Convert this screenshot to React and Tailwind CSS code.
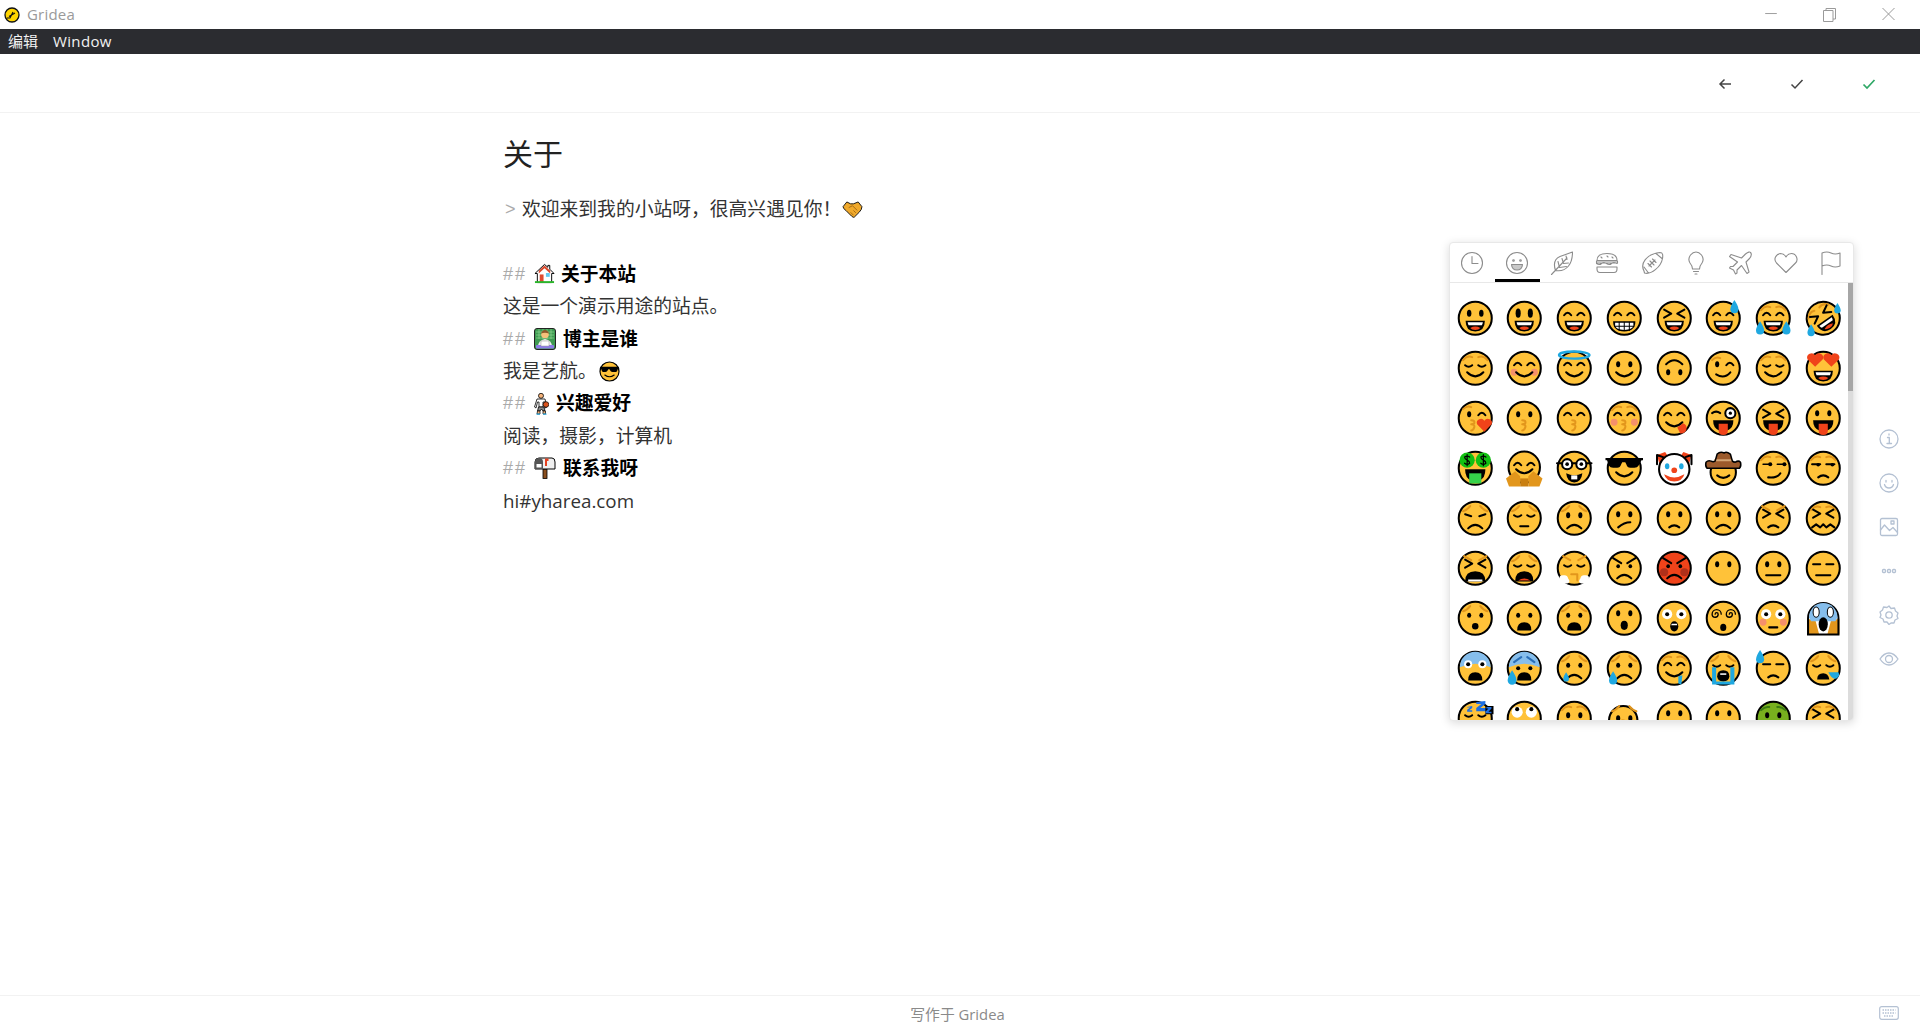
import React, { Fragment, createElement } from "react";

const Y = "#FFC239";
const K = "#000";
const O = "#E2961C";
const R = "#F0431A";
const B = "#1FA8E0";

// emoji parts, all in a 36x36 box
const S = (d, c = K, w = 2) => (
  <path d={d} fill="none" stroke={c} strokeWidth={w} strokeLinecap="round" strokeLinejoin="round" />
);
const F = (d, c = K) => <path d={d} fill={c} />;
const face = (fill = Y) => <circle cx="18" cy="18" r="16.3" fill={fill} stroke={K} strokeWidth="2" />;
const dots = (y = 14, r = 2, h = 3) => (
  <>
    <ellipse cx="12" cy={y} rx={r} ry={h} />
    <ellipse cx="24" cy={y} rx={r} ry={h} />
  </>
);
const tall = () => dots(13, 2.5, 4.5);
const arch = () => S("M8 15q3.5-5 7 0M21 15q3.5-5 7 0");
const shut = () => S("M8 15q3.5 3 7 0M21 15q3.5 3 7 0");
const xeyes = () => S("M8 9.5l7 4l-7 4M28 9.5l-7 4l7 4");
const flatEyes = () => S("M8 14h7M21 14h7");
const sad = () => S("M6 11q4-1 7-5M30 11q-4-1-7-5", O);
const up = () => S("M6 10q4-5 9-3M30 10q-4-5-9-3", O);
const angry = () => S("M7 6l7 4M29 6l-7 4", O);
const open = () => (
  <>
    {F("M8.5 20.5h19q0 10.500-9.500 10.500T8.500 20.500z")}
    {F("M10.500 22h15q-.3 2-1 3h-13q-.7-1-1-3z", "#fff")}
    {F("M13 27.500q5-2.500 10 0q-1.500 2-5 2t-5-2z", R)}
  </>
);
const tongue = () => (
  <>
    {F("M8 20h20q0 8-6 10H14Q8 28 8 20z")}
    {F("M13.500 23.500h9v7q0 4-4.500 4t-4.500-4z", R)}
  </>
);
const smile = () => S("M10 22q8 8 16 0");
const frown = () => S("M11 28q7-7 14 0");
const small = () => S("M13 27q5-4 10 0");
const flat = () => S("M11 25h14");
const kiss = (x = 0) => S(`M${16 + x} 20q4 0 3 3q-1 1-3 1q4 0 3 3t-3 3`, O);
const cheeks = () => (
  <>
    <circle cx="8" cy="22" r="3.4" fill="#F5906A" />
    <circle cx="28" cy="22" r="3.4" fill="#F5906A" />
  </>
);
const drop = (x, y, s = 1) => F(`M${x} ${y}q${-4 * s} ${6 * s} ${-4 * s} ${9 * s}a${4 * s} ${4 * s} 0 0 0 ${8 * s} 0q0 ${-3 * s} ${-4 * s} ${-9 * s}z`, B);
const heart = (x, y, s = 1, c = R) => F(`M${x} ${y + 8 * s}l${-8 * s} ${-8 * s}a${4.5 * s} ${4.5 * s} 0 0 1 ${8 * s} ${-4 * s}a${4.5 * s} ${4.5 * s} 0 0 1 ${8 * s} ${4 * s}z`, c);
const blueTop = () => F("M2.8 17a15.2 15.2 0 0 1 30.4 0q-15-7-30.4 0z", "#86BEEC");
const bigEyes = (w = 5) => (
  <>
    <circle cx="11" cy="14" r={w} fill="#fff" />
    <circle cx="25" cy="14" r={w} fill="#fff" />
    <circle cx="11" cy="14" r="2" />
    <circle cx="25" cy="14" r="2" />
  </>
);
const bMouth = () => F("M11 30q0-8 7-8t7 8z");
const oMouth = (y = 26, rx = 3, ry = 3.5) => <ellipse cx="18" cy={y} rx={rx} ry={ry} />;
const spiral = (x) => S(`M${x} 14a1.5 1.5 0 0 1 3 0a3 3 0 0 1-6 0a4.5 4.5 0 0 1 9 0`, K, 1.3);
const winkEye = () => <ellipse cx="12" cy="14" rx="2" ry="3" />;
const E = (...parts) => createElement(Fragment, null, ...parts);

// rows read off the picker, left to right
const emojis = [
  E(face(), dots(13, 2.2, 3.5), open()),
  E(face(), tall(), open()),
  E(face(), arch(), open()),
  E(face(), arch(), F("M7 21h22q0 10-11 10T7 21z"), F("M9 22.5h18v3q-1 4-9 4t-9-4z", "#fff"), S("M13 22v8M18 22v8M23 22v8M8.5 26h19", K, 1)),
  E(face(), xeyes(), open()),
  E(face(), arch(), open(), drop(29, 0, 1)),
  E(face(), up(), arch(), open(), drop(5, 21, 1), drop(31, 21, 1)),
  E(<g transform="rotate(-35 18 18)">{face()}{up()}{xeyes()}{open()}</g>, drop(32, 3, .8), drop(6, 24, .9)),

  E(face(), up(), shut(), smile()),
  E(face(), arch(), cheeks(), smile()),
  E(face(), arch(), smile(), <ellipse cx="18" cy="5" rx="15" ry="3.5" fill="none" stroke={B} strokeWidth="2.4" />),
  E(face(), dots(), smile()),
  E(face(), dots(22), S("M10 14q8-8 16 0")),
  E(face(), S("M7 10q4-4 8-2", O), winkEye(), S("M21 15q3.5-5 7 0"), S("M11 24q8 5 14-2")),
  E(face(), up(), shut(), smile()),
  E(face(), heart(10, 9, .95), heart(26, 9, .95), open()),

  E(face(), S("M6 9q4-4 8-2", O), winkEye(), S("M21 15q3.5-5 7 0"), kiss(-2), heart(27, 24, .9)),
  E(face(), dots(), kiss()),
  E(face(), arch(), kiss()),
  E(face(), up(), arch(), cheeks(), kiss()),
  E(face(), arch(), smile(), F("M21 27l6-4q4 2 3 6t-6 4z", R)),
  E(face(), S("M7 13q4-3 8 0"), <circle cx="25" cy="13" r="5" fill="#fff" stroke={K} strokeWidth="2" />, <circle cx="25" cy="13" r="1.6" />, tongue()),
  E(face(), xeyes(), tongue()),
  E(face(), dots(13), tongue()),

  E(face(), <circle cx="10" cy="10" r="7.5" fill="#12C012" />, <circle cx="26" cy="10" r="7.5" fill="#12C012" />, S("M12.5 7q-2.500-2-5 0q0 2 2.500 3t2.500 3q-2.500 2-5 0M10 4.500v11M28.500 7q-2.500-2-5 0q0 2 2.500 3t2.500 3q-2.500 2-5 0M26 4.500v11", K, 1.2), F("M8 19h20q0 9-6 11H14Q8 28 8 19z"), F("M12 23h12v10H12z", "#35D24A")),
  E(<circle cx="18" cy="17" r="15.500" fill={Y} stroke={K} strokeWidth="2" />, arch(), S("M10 19q8 8 16 0"), F("M0 28l9-7l5 5v10H3z", O), F("M36 28l-9-7l-5 5v10h11z", O), F("M14 28h8v8h-8z", "#C97F10")),
  E(face(), <circle cx="11" cy="14" r="5" fill="#fff" stroke={K} strokeWidth="2" />, <circle cx="25" cy="14" r="5" fill="#fff" stroke={K} strokeWidth="2" />, <circle cx="11" cy="14" r="1.800" />, <circle cx="25" cy="14" r="1.800" />, S("M1 13h5M30 13h5M16 13h4"), F("M10 23q8 4 16 0q-1 9-8 9t-8-9z"), F("M15 25h6v4h-6z", "#fff")),
  E(face(), F("M-.5 8h37v2h-1.500l-3 5.500q-1 2-4 2h-4q-3 0-4-3.500l-1-2h-3l-1 2q-1 3.500-4 3.500H7q-3 0-4-2l-2-5.500H-.5z"), smile()),
  E(F("M1 5l8-3l4 6l-9 8zM35 5l-8-3l-4 6l9 8z", R), <circle cx="18" cy="19" r="15" fill="#fff" stroke={K} strokeWidth="2" />, S("M7 7L1 5v9M29 7l6-2v9"), <ellipse cx="11" cy="16" rx="2.200" ry="3" fill={B} />, <ellipse cx="25" cy="16" rx="2.200" ry="3" fill={B} />, <circle cx="18" cy="20" r="2.800" fill={R} />, F("M8 24q10 6 20 0q-2 7-10 7t-10-7z", R)),
  E(<circle cx="18" cy="22" r="12.500" fill={Y} stroke={K} strokeWidth="2" />, F("M1 12q-1 4 1 6h32q2-2 1-6q-2-2-5 0q-2 0-3-1l-2-7q-4-3-6-1q-4-2-7 1l-2 7q-2 1-4 0q-3-1-5 1z", "#9C5A2B"), F("M9 9h18l.5 2H8.500z", "#D4A574"), S("M1 12q-1 4 1 6h32q2-2 1-6q-2-2-5 0q-2 0-3-1l-2-7q-4-3-6-1q-4-2-7 1l-2 7q-2 1-4 0q-3-1-5 1z", K, 1.500), S("M12 25q6 5 12 0")),
  E(face(), up(), <circle cx="15" cy="14" r="2" />, <circle cx="29" cy="14" r="2" />, S("M8 14h8M22 14h8", K, 1.600), S("M13 27q9 1 12-4")),
  E(face(), up(), S("M7 14h8M21 14h8"), <circle cx="13" cy="14.500" r="1.800" />, <circle cx="27" cy="14.500" r="1.800" />, small()),

  E(face(), sad(), S("M8 14l6 2M28 14l-6 2"), frown()),
  E(face(), sad(), shut(), S("M14 26h8")),
  E(face(), sad(), dots(15), frown()),
  E(face(), dots(), S("M12 27q6-5 12-5")),
  E(face(), dots(), small()),
  E(face(), dots(), frown()),
  E(face(), angry(), xeyes(), small()),
  E(face(), up(), xeyes(), S("M7 27l4-3l4 3l3-3l3 3l4-3l4 3")),

  E(face(), angry(), xeyes(), F("M8 31q0-10 10-10t10 10z"), F("M11 29h14v2H11z", "#fff")),
  E(face(), sad(), shut(), F("M9 31q0-10 9-10t9 10z"), F("M12 30q6-4 12 0z", R)),
  E(face(), angry(), shut(), S("M15 24h6v6", O), F("M4 30q-2-5 3-5q4-1 5 3q3 4-1 5H7q-3 0-3-3z", "#fff"), F("M32 30q2-5-3-5q-4-1-5 3q-3 4 1 5h4q3 0 3-3z", "#fff")),
  E(face(), S("M7 8l8 5M29 8l-8 5"), dots(16, 1.800, 2), frown()),
  E(face(R), <circle cx="8" cy="22" r="4" fill="#B0301A" />, <circle cx="28" cy="22" r="4" fill="#B0301A" />, S("M7 8l8 5M29 8l-8 5"), dots(16, 1.800, 2), frown()),
  E(face(), dots()),
  E(face(), dots(), flat()),
  E(face(), flatEyes(), flat()),

  E(face(), sad(), dots(15, 2, 2.500), oMouth(26, 3.200, 3.200)),
  E(face(), dots(15, 2, 2.500), bMouth()),
  E(face(), sad(), dots(15, 2, 2.500), bMouth()),
  E(face(), dots(13), oMouth(25, 3.500, 4.500)),
  E(face(), bigEyes(5), oMouth(26, 4, 5), F("M15.500 23.500h5l.5 1.500h-6z", "#fff")),
  E(face(), spiral(10), spiral(24), oMouth(27, 3, 3.500)),
  E(face(), bigEyes(5), cheeks(), S("M14 27h8")),
  E(F("M2 19h8l4 15H2zM34 19h-8l-4 15h12z", O), <path d="M3 18a15 15 0 0 1 30 0v16H3z" fill="none" stroke={K} strokeWidth="2" />, F("M4 17a14 14 0 0 1 28 0l-2 4H6z", "#86BEEC"), <ellipse cx="11" cy="12" rx="3" ry="5" fill="#fff" stroke={K} strokeWidth="1" />, <ellipse cx="25" cy="12" rx="3" ry="5" fill="#fff" stroke={K} strokeWidth="1" />, <ellipse cx="18" cy="24" rx="4.500" ry="7" />),

  E(face(), blueTop(), bigEyes(4), bMouth()),
  E(face(), blueTop(), S("M8 12q4-3 7-5M28 12q-4-3-7-5", "#2A6FB8"), dots(18, 2, 2), bMouth(), drop(6, 20, 1.100)),
  E(face(), sad(), dots(15, 2, 2.500), frown(), drop(10, 22, .7)),
  E(face(), sad(), dots(15, 2, 2.500), frown(), drop(7, 21, 1)),
  E(face(), up(), arch(), smile(), F("M22 26l4-1l-1 9l-3-1z", B)),
  E(face(), sad(), shut(), F("M12 26q0-6 6-6t6 6q0 5-6 5t-6-5z"), F("M15 23h6v1.500h-6z", "#fff"), F("M7 17h4v14h14V17h4v17H7z", B)),
  E(face(), flatEyes(), small(), drop(5, 0, 1)),
  E(face(), sad(), shut(), F("M12 29q0-6 6-6q5 0 6 6z"), F("M23 22h10q2 4-2 6t-8-6z", B)),

  E(face(), shut(), F("M10 7l5-1v2l-3 2h3v1.500h-5v-2l3-2h-3zM19 2l9-1v3l-5 4h6v3h-10V8l5-4h-5z", "#1F6FE0"), F("M28 6h8v8h-8z", "#000"), F("M29 7h5v1.500l-3 3h3v1.500h-6v-1.500l3-3h-2z", "#1F6FE0")),
  E(face(), <circle cx="11" cy="12" r="5.500" fill="#fff" />, <circle cx="25" cy="12" r="5.500" fill="#fff" />, <circle cx="11" cy="9" r="2" />, <circle cx="25" cy="9" r="2" />),
  E(face(), up(), dots(15), S("M14 26h8")),
  E(<circle cx="17" cy="20" r="14" fill={Y} stroke={K} strokeWidth="2" />, sad(), dots(18), kiss()),
  E(face(), dots(13), S("M8 24h20")),
  E(face(), dots(13), S("M8 24h20", "#999", 2)),
  E(face("#78B01E"), S("M6 10q4-4 8-3M30 10q-4-4-8-3", "#3B7A12"), dots(15)),
  E(face(), up(), xeyes()),
];

function Emoji({ children, size = 36.5 }) {
  return (
    <svg viewBox="0 0 36 36" width={size} height={size} className="overflow-visible">
      {children}
    </svg>
  );
}

const tabStroke = { fill: "none", stroke: "#8c8c8c", strokeWidth: 1.1, strokeLinecap: "round", strokeLinejoin: "round" };

// picker category icons
const tabIcons = [
  <g {...tabStroke}><circle cx="12" cy="12" r="10.500" /><path d="M12 5.500V12.500h6" /></g>,
  <g {...tabStroke}><circle cx="12" cy="12" r="10.500" /><circle cx="8.500" cy="9.500" r=".8" /><circle cx="15.500" cy="9.500" r=".8" /><path d="M6.500 13.500h11q-.5 5.500-5.500 5.500t-5.500-5.500z" fill="#c9c9c9" /></g>,
  <g {...tabStroke}><path d="M1.500 23.500L17 7M5.500 19.500Q2 9 10 5.500 17 3 22.500 1q0 9-4 14-5 6-13 4.500zM8 10.500l1.500 6M12 7.500l1.500 5M16 5l1 3.500M9.500 16.500l7-1M13.500 12.500l5-.5" /></g>,
  <g {...tabStroke}><path d="M2 9.500Q2 2.500 12 2.500t10 7zM1.500 12.500q3 2 5 0t5 0 5 0 5.500 0M2 16h20v2q0 3.500-3 3.500H5q-3 0-3-3.500zM6 6l1 1M12 5l1 1M17 6l1 1M1.500 10h21v2h-21z" /></g>,
  <g {...tabStroke}><path d="M4 20C0 13 6 3 20 1.500c3 0 3 3 2.500 6C21 16 11 24 4.500 22zM4 16l4.500 6M16 2.500l6 5M9 15l6-6M10 10l4 4M12.500 8l3.500 3.500M8 12.500l3.500 3.500" /></g>,
  <g {...tabStroke}><path d="M8.500 18q0-3-2.500-6Q3.500 8 6.500 4q2.500-3 5.500-3t5.500 3q3 4 .5 8-2.500 3-2.500 6zM8.500 18h7M9.500 20.500h5M11 23h2" /></g>,
  <g {...tabStroke}><path d="M21.500 1.500q2 2-1 6L17 11l3 10-2 1.500-5.500-8L8 19v3l-1.500 1-2-4-4-2 1-1.500H4l4.500-4.500-8-5.500L2 3.500 12.500 7 16.500 3q4-3 5-1.500z" /></g>,
  <g {...tabStroke}><path d="M12 21.500L2.500 12Q0 9 1.500 6t5-3.500Q10 2.500 12 6q2-3.500 5.500-3.500t5 3.500T21.500 12z" /></g>,
  <g {...tabStroke}><path d="M3 23.500V2q5-2 9 0t9 0v13q-5 2-9 0t-9 0" /></g>,
];

const sideStroke = { fill: "none", stroke: "#b4c1d3", strokeWidth: 1.3, strokeLinecap: "round", strokeLinejoin: "round" };

const sideIcons = [
  <g {...sideStroke}><circle cx="10" cy="10" r="9" /><path d="M8.500 8.500H10.300V14M8 14.500h4.500M10 5v1" /></g>,
  <g {...sideStroke}><circle cx="10" cy="10" r="9" /><path d="M7 7.500v1.500M13 7.500v1.500M5.500 11.500q1 3.500 4.500 3.500t4.500-3.500" /></g>,
  <g {...sideStroke}><rect x="1.500" y="1.500" width="17" height="17" rx="1.500" /><path d="M1.500 13l4-5 5 5.500 3.500-3 4.500 5" /><rect x="12" y="4" width="3" height="3" /></g>,
  <g {...sideStroke}><rect x="3.500" y="8.500" width="3" height="3" rx="1" /><rect x="8.500" y="8.500" width="3" height="3" rx="1" /><rect x="13.500" y="8.500" width="3" height="3" rx="1" /></g>,
  <g {...sideStroke}><path d="M10 1l2 2.500 3.500-.5 1 3 2.500 2-1 3 1 2.500-3 1.500-1 3H12l-2 1.500L8 17H5l-1-3-3-1.500 1-2.500-1-3 2.500-2 1-3 3.500.5z" /><circle cx="10" cy="10" r="3.200" /></g>,
  <g {...sideStroke}><path d="M1 10q4-6 9-6t9 6q-4 6-9 6t-9-6z" /><circle cx="10" cy="10" r="3.500" /></g>,
];

function Picker() {
  return (
    <div className="absolute left-[1449px] top-[242px] w-[405px] h-[479px] flex flex-col overflow-hidden bg-white border border-[#e8e8e8] rounded-[4px] shadow-[0_2px_10px_rgba(0,0,0,0.15)]">
      <div className="flex h-[40px] shrink-0 border-b border-[#e8e8e8]">
        {tabIcons.map((icon, i) => (
          <div key={i} className={`flex flex-1 items-center justify-center ${i === 1 ? "border-b-[3px] border-black pt-[3px]" : ""}`}>
            <svg viewBox="0 0 24 24" width="24" height="24">{icon}</svg>
          </div>
        ))}
      </div>
      <div className="flex flex-1 min-h-0">
        <div className="grid grid-cols-8 flex-1 content-start pt-[10px] overflow-hidden">
          {emojis.map((em, i) => (
            <div key={i} className="flex h-[50px] items-center justify-center">
              <Emoji>{em}</Emoji>
            </div>
          ))}
        </div>
        <div className="w-[5px] shrink-0 bg-[#dcdcdc]">
          <div className="h-[108px] bg-[#a6a6a6]" />
        </div>
      </div>
    </div>
  );
}

const House = () => (
  <svg viewBox="0 0 22 22" width="21" height="21">
    <path d="M11 1.500L1 11h2.500v9.500h15V11H21L16.500 6.500V2.500h-2v2z" fill="#fff" stroke="#000" strokeWidth="1" strokeLinejoin="round" />
    <path d="M11 2.500L5 8v3l6-5.500L17 11V8z" fill="#D9482B" />
    <rect x="12.500" y="10.500" width="4" height="4" fill="#63C8F0" />
    <rect x="6" y="12" width="4" height="8" fill="#E04A30" />
    <rect x="1" y="19" width="20" height="2" fill="#2AB52A" />
  </svg>
);

const Coder = () => (
  <svg viewBox="0 0 22 22" width="22" height="22">
    <rect x=".5" y=".5" width="21" height="21" rx="2.500" fill="#3E9A52" stroke="#222" />
    <path d="M2 4h18M2 7h18M2 10h18M5 1v10M9 1v10M13 1v10M17 1v10" stroke="#8FD68F" strokeWidth=".7" />
    <circle cx="11" cy="6.500" r="3.800" fill="#F5C07A" />
    <path d="M7 5.500Q8 2 11 2t4 3.500Q11 4 7 5.500z" fill="#8A5A2B" />
    <path d="M4 19q0-7 7-8 7 1 7 8z" fill="#EDEDED" />
    <rect x="2" y="17" width="18" height="3.500" rx="1" fill="#8E7BE8" />
    <rect x="7" y="13" width="8" height="5" fill="#fff" stroke="#999" strokeWidth=".5" />
  </svg>
);

const Sunglasses = () => (
  <svg viewBox="0 0 36 36" width="21" height="21">
    {face()}
    {F("M2 10h32v2h-1l-2 5q-1 2-4 2h-4q-3 0-4-3l-1-2h-2l-1 2q-1 3-4 3H9q-3 0-4-2l-2-5H2z")}
    {S("M10 24q8 6 16 0")}
  </svg>
);

const Player = () => (
  <svg viewBox="0 0 15 22" width="15" height="22">
    <circle cx="7" cy="2.800" r="2.500" fill="#F5B37A" stroke="#000" strokeWidth=".8" />
    <path d="M3 6h8l2 8-2 1V9H9v5H5V9H3.500L2 15l-1.500-1z" fill="#fff" stroke="#000" strokeWidth=".8" />
    <path d="M4.500 14h5.500l1 4H9l-1.500-2L6 18H3.500z" fill="#8c8c8c" stroke="#000" strokeWidth=".8" />
    <path d="M3.500 18H6v3H3zM9 18h2.500V21H9z" fill="#F5B37A" stroke="#000" strokeWidth=".7" />
    <path d="M2.500 20.500h3.500v1.200H2.500zM9 20.500h3.500v1.200H9z" fill="#2AA8E0" />
    <circle cx="12" cy="11.500" r="2.800" fill="#D9541E" stroke="#000" strokeWidth=".7" />
  </svg>
);

const Mailbox = () => (
  <svg viewBox="0 0 22 22" width="22" height="22">
    <rect x="9" y="12" width="4" height="9.500" fill="#8A4F1F" stroke="#000" strokeWidth=".8" />
    <path d="M1 12V5q0-4 4-4h13q3 0 3 4v7z" fill="#EFEFEF" stroke="#000" strokeWidth="1" />
    <path d="M1 12V5q0-4 4-4t4 4v7z" fill="#555" />
    <path d="M2.500 7h5v3.500h-5z" fill="#fff" />
    <path d="M11 1.500h3.500v2.500h-1.500v5h-2z" fill="#E5401F" />
  </svg>
);

const Shake = () => (
  <svg viewBox="0 0 22 18" width="21" height="17">
    <path d="M5 1L1 6q0 2 3 4l6 6q2 2 3 1l5-5q3-3 3-6l-4-5-5 2H9z" fill="#F0A92B" stroke="#111" strokeWidth="1" strokeLinejoin="round" />
    <path d="M7 7l4-2 5 5M9 12l3 3M12 10l2.500 2.500" fill="none" stroke="#9A6110" strokeWidth=".9" />
  </svg>
);

function Heading({ icon, gap, children }) {
  return (
    <div className="flex items-center h-[32.4px]">
      <span className="text-[#aaaaaa] text-[18px] tracking-[2px] w-[31px] shrink-0 font-['Liberation_Sans']">##</span>
      <span className={`flex shrink-0 ${gap}`}>{icon}</span>
      <span className="font-bold text-black">{children}</span>
    </div>
  );
}

export default function App() {
  return (
    <div className="relative flex flex-col h-[1030px] overflow-hidden bg-white text-[18.8px] leading-[32.4px] text-[#333] font-['Open_Sans','Noto_Sans_CJK_SC',sans-serif]">
      {/* 标题栏 */}
      <div className="flex items-center justify-between h-[29px] shrink-0 pl-[4px]">
        <div className="flex items-center gap-[7px]">
          <svg viewBox="0 0 16 16" width="16" height="16">
            <circle cx="8" cy="8" r="7" fill="#FFD500" stroke="#111" strokeWidth="1.300" />
            <path d="M5 9.500L11 6M9 5L6 11h-3" fill="none" stroke="#111" strokeWidth="1.200" />
          </svg>
          <span className="text-[15px] tracking-[0.2px] leading-[29px] text-[#9a9a9a]">Gridea</span>
        </div>
        <div className="flex items-center pr-[1px]">
          <svg viewBox="0 0 60 29" width="58" height="29"><path d="M24 13.500h12" stroke="#9a9a9a" fill="none" /></svg>
          <svg viewBox="0 0 58 29" width="58" height="29"><path d="M23.500 10.500h9.500v11h-9.500zM26 10.500V8.500h9.500v10.500h-2.500" stroke="#9a9a9a" fill="none" /></svg>
          <svg viewBox="0 0 61 29" width="61" height="29"><path d="M24.500 8l12 12M36.500 8l-12 12" stroke="#9a9a9a" fill="none" /></svg>
        </div>
      </div>

      {/* 菜单栏 */}
      <div className="flex items-center gap-[15px] h-[25px] shrink-0 pl-[8px] bg-[#2b2c30] text-[15px] leading-[25px] text-[#f2f2f2]">
        <span>编辑</span>
        <span className="tracking-[0.35px]">Window</span>
      </div>

      {/* 工具栏 */}
      <div className="flex items-center justify-end h-[59px] shrink-0 pr-[44px] pt-[2px] gap-[58px] border-b border-[#f2f2f2]">
        <svg viewBox="0 0 14 14" width="14" height="14"><path d="M13 7H2M6.500 2.500L2 7l4.500 4.500" fill="none" stroke="#444" strokeWidth="1.500" /></svg>
        <svg viewBox="0 0 14 14" width="14" height="14"><path d="M1.500 7.500L5 11l7.500-8" fill="none" stroke="#444" strokeWidth="1.500" /></svg>
        <svg viewBox="0 0 14 14" width="14" height="14"><path d="M1.500 7.500L5 11l7.500-8" fill="none" stroke="#2FA866" strokeWidth="1.700" /></svg>
      </div>

      {/* 编辑区 */}
      <div className="flex-1 min-h-0 pl-[503px] pt-[21px]">
        <div className="text-[30px] leading-[40px] text-[#222] mb-[19px]">关于</div>
        <div className="flex items-center h-[32.4px]">
          <span className="text-[#aaaaaa] text-[18px] pl-[2px] w-[19px] shrink-0 font-['Liberation_Sans']">&gt;</span>
          <span>欢迎来到我的小站呀，很高兴遇见你！</span>
          <span className="flex ml-[1px]"><Shake /></span>
        </div>
        <div className="h-[32.4px]" />
        <Heading icon={<House />} gap="mr-[6px]">关于本站</Heading>
        <div>这是一个演示用途的站点。</div>
        <Heading icon={<Coder />} gap="mr-[7px]">博主是谁</Heading>
        <div className="flex items-center h-[32.4px]">
          <span>我是艺航。</span>
          <span className="flex ml-[2px]"><Sunglasses /></span>
        </div>
        <Heading icon={<Player />} gap="mr-[7px]">兴趣爱好</Heading>
        <div>阅读，摄影，计算机</div>
        <Heading icon={<Mailbox />} gap="mr-[7px]">联系我呀</Heading>
        <div>hi#yharea.com</div>
      </div>

      {/* 底部 */}
      <div className="relative flex items-center justify-center h-[35px] shrink-0 pr-[5px] pt-[2px] border-t border-[#f2f2f2] text-[14.8px] text-[#8a8a8a]">
        写作于 Gridea
        <svg viewBox="0 0 20 14" width="20" height="14" className="absolute right-[21px] top-[10px]">
          <rect x=".7" y=".7" width="18.600" height="12.600" rx="2" fill="none" stroke="#b4c1d3" strokeWidth="1.200" />
          <path d="M3.500 4h13M3.500 7h13M5 10h10" stroke="#b4c1d3" strokeWidth="1.300" strokeDasharray="1.500 1" />
        </svg>
      </div>

      <Picker />

      {/* 右侧工具 */}
      <div className="absolute right-[21px] top-[417px] flex flex-col">
        {sideIcons.map((icon, i) => (
          <div key={i} className="flex h-[44px] items-center justify-center">
            <svg viewBox="0 0 20 20" width="20" height="20">{icon}</svg>
          </div>
        ))}
      </div>
    </div>
  );
}
